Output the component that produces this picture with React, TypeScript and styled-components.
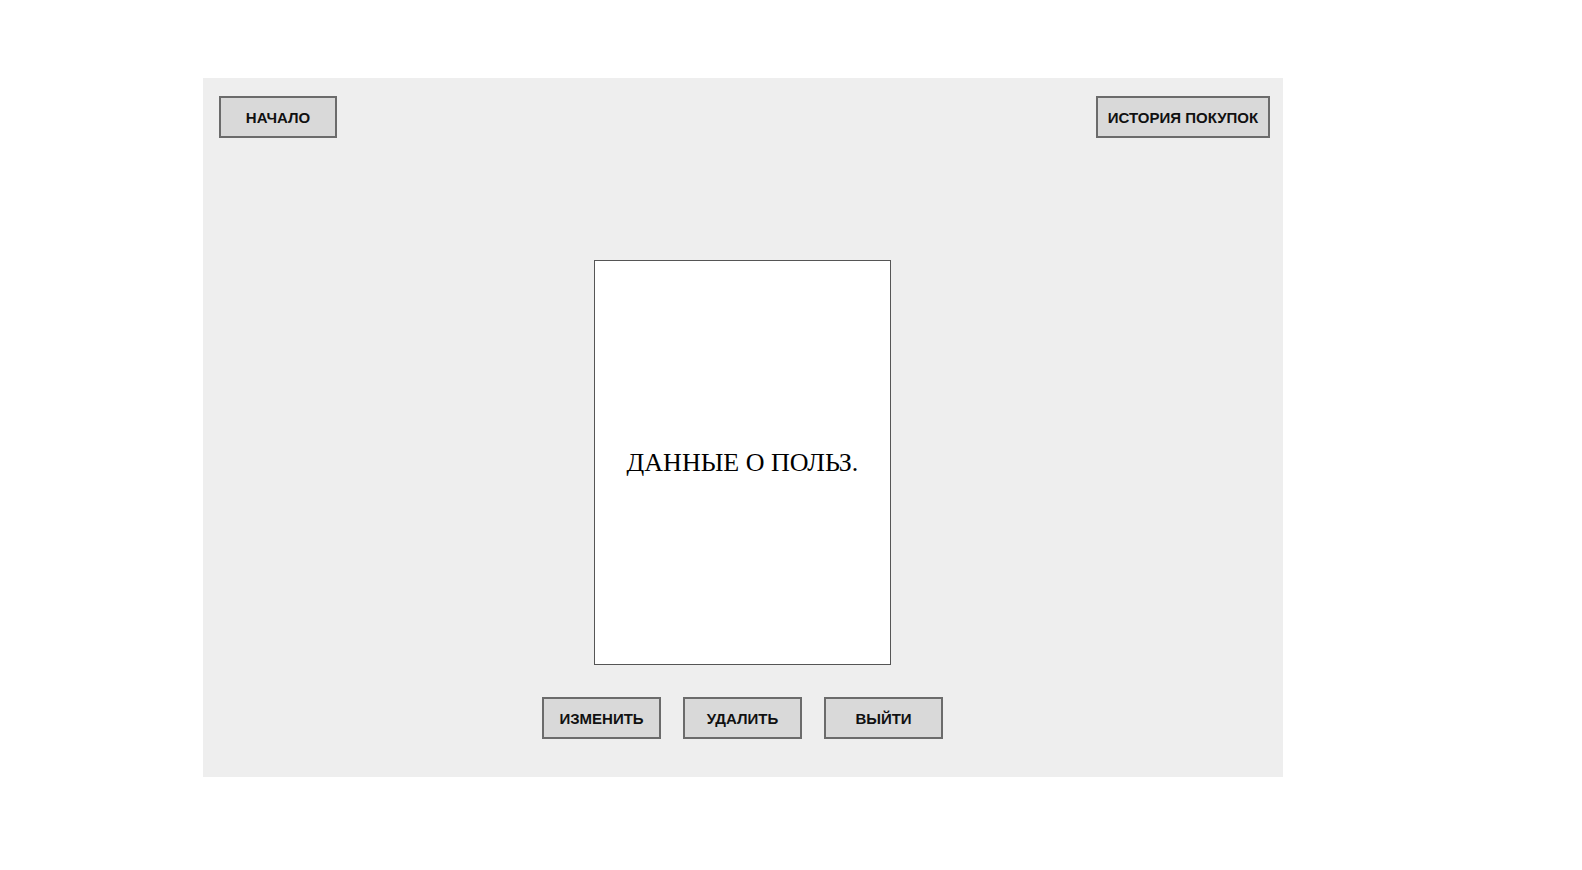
import React from "react";
import styled, { createGlobalStyle } from "styled-components";

const Global = createGlobalStyle`
  html, body { margin: 0; padding: 0; background: #ffffff; }
  body { font-family: "Liberation Sans", Arial, sans-serif; }
`;

const Panel = styled.div`
  margin: 78px 0 0 203px;
  width: 1080px;
  height: 699px;
  background: #eeeeee;
  box-sizing: border-box;
  padding: 18px 13px 0 16px;
  display: flex;
  flex-direction: column;
`;

const TopBar = styled.div`
  display: flex;
  justify-content: space-between;
  align-items: flex-start;
`;

const Button = styled.button<{ $w: number }>`
  width: ${(p) => p.$w}px;
  height: 42px;
  box-sizing: border-box;
  background: #d9d9d9;
  border: 2px solid #6b6b6b;
  padding: 0;
  font-family: "Liberation Sans", Arial, sans-serif;
  font-weight: bold;
  font-size: 15px;
  color: #111111;
  cursor: pointer;
`;

const Center = styled.div`
  display: flex;
  flex-direction: column;
  align-items: center;
  margin: 122px 0 0 -4px;
`;

const Card = styled.div`
  width: 297px;
  height: 405px;
  box-sizing: border-box;
  background: #ffffff;
  border: 1.5px solid #555555;
  display: flex;
  align-items: center;
  justify-content: center;
  font-family: "Liberation Serif", "Times New Roman", serif;
  font-size: 26px;
  color: #000000;
`;

const Actions = styled.div`
  display: flex;
  gap: 22px;
  margin-top: 32px;
`;

export default function App() {
  return (
    <>
      <Global />
      <Panel>
        <TopBar>
          <Button $w={118}>НАЧАЛО</Button>
          <Button $w={174}>ИСТОРИЯ ПОКУПОК</Button>
        </TopBar>
        <Center>
          <Card>ДАННЫЕ О ПОЛЬЗ.</Card>
          <Actions>
            <Button $w={119}>ИЗМЕНИТЬ</Button>
            <Button $w={119}>УДАЛИТЬ</Button>
            <Button $w={119}>ВЫЙТИ</Button>
          </Actions>
        </Center>
      </Panel>
    </>
  );
}
